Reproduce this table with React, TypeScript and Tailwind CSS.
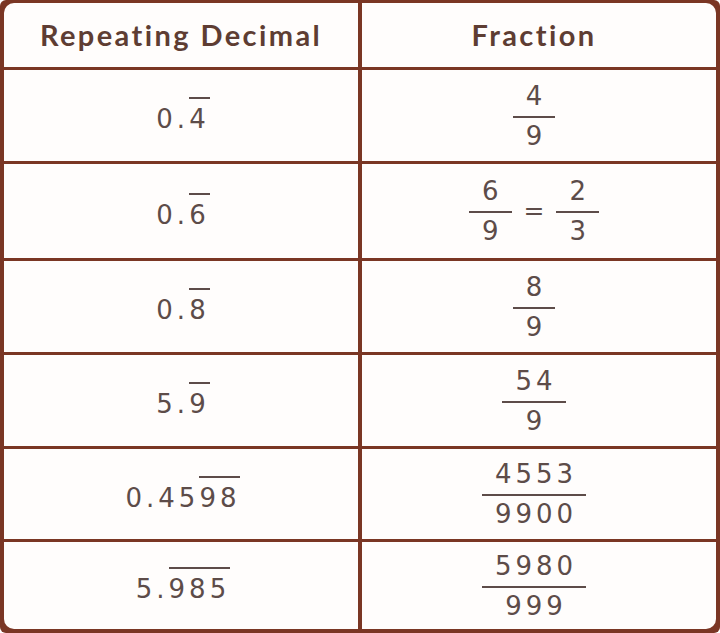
import React from 'react';

type Row = {
  whole: string;
  repeat: string;
  fractions: [string, string][];
};

const rows: Row[] = [
  { whole: '0.', repeat: '4', fractions: [['4', '9']] },
  { whole: '0.', repeat: '6', fractions: [['6', '9'], ['2', '3']] },
  { whole: '0.', repeat: '8', fractions: [['8', '9']] },
  { whole: '5.', repeat: '9', fractions: [['54', '9']] },
  { whole: '0.45', repeat: '98', fractions: [['4553', '9900']] },
  { whole: '5.', repeat: '985', fractions: [['5980', '999']] },
];

const Fraction = ({ top, bottom }: { top: string; bottom: string }) => (
  <div className="inline-flex flex-col items-stretch text-center">
    <span className="pl-[13px] pr-[9px] leading-[28px]">{top}</span>
    <span className="mt-[6px] mb-[4px] h-[2px] bg-[#5d4c49]" />
    <span className="pl-[13px] pr-[9px] leading-[28px]">{bottom}</span>
  </div>
);

const App = () => {
  return (
    <div className="w-[720px] h-[633px] bg-white">
      <div className="grid h-full grid-cols-2 grid-rows-[64px_91px_94px_91px_91px_90px_87px] gap-x-[4px] gap-y-[3px] rounded-[6px] bg-[#7a3624] pt-[3px] pb-[4px] px-[4px] font-['Lato','Liberation_Sans',sans-serif]">
        <div className="flex items-center justify-center rounded-tl-[10px] bg-[#fffdfc] text-[29px] font-bold tracking-[2.4px] text-[#5e3d33]">
          Repeating Decimal
        </div>
        <div className="flex items-center justify-center rounded-tr-[10px] bg-[#fffdfc] pr-[10px] text-[29px] font-bold tracking-[2.4px] text-[#5e3d33]">
          Fraction
        </div>
        {rows.map((row, i) => {
          const last = i === rows.length - 1;
          return (
            <React.Fragment key={i}>
              <div
                className={
                  "flex items-center justify-center bg-[#fffdfc] pt-[8px] pl-[4px] font-['DejaVu_Sans',sans-serif] text-[26px] tracking-[4px] text-[#5d4c49] " +
                  (last ? 'rounded-bl-[10px]' : '')
                }
              >
                <span>
                  {row.whole}
                  <span className="border-t-2 border-[#5d4c49] pt-[5px]">{row.repeat}</span>
                </span>
              </div>
              <div
                className={
                  "flex items-center justify-center gap-[12px] bg-[#fffdfc] pr-[10px] font-['DejaVu_Sans',sans-serif] text-[26px] tracking-[4px] text-[#5d4c49] " +
                  (last ? 'rounded-br-[10px]' : '')
                }
              >
                {row.fractions.map(([top, bottom], j) => (
                  <React.Fragment key={j}>
                    {j > 0 && <span className="text-[25px] tracking-normal">=</span>}
                    <Fraction top={top} bottom={bottom} />
                  </React.Fragment>
                ))}
              </div>
            </React.Fragment>
          );
        })}
      </div>
    </div>
  );
};

export default App;
